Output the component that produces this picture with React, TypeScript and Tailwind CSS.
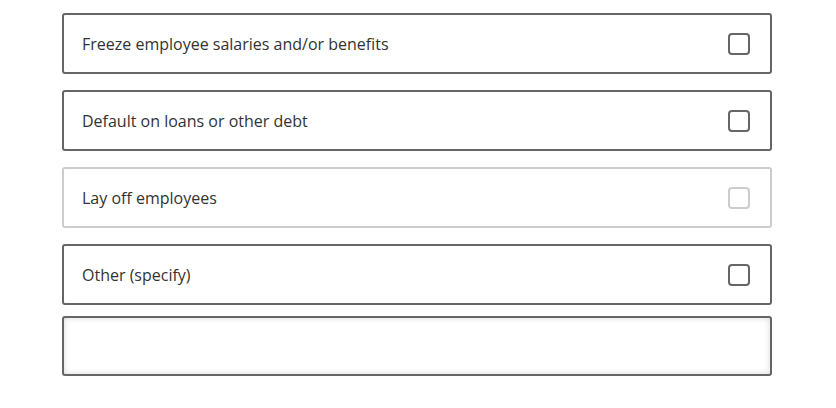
const options = [
  { label: "Freeze employee salaries and/or benefits", disabled: false },
  { label: "Default on loans or other debt", disabled: false },
  { label: "Lay off employees", disabled: true },
  { label: "Other (specify)", disabled: false },
];

export default function App() {
  return (
    <div className="min-h-screen bg-white pt-[13px] font-['Open_Sans',sans-serif] text-[#333]">
      <div className="ml-[62px] w-[710px]">
        {options.map((opt) => (
          <label
            key={opt.label}
            className={
              opt.disabled
                ? "mb-[16px] flex h-[61px] items-center justify-between rounded-[3px] border-2 border-[#ccc] pl-[18px] pr-[20px]"
                : "mb-[16px] flex h-[61px] items-center justify-between rounded-[3px] border-2 border-[#666] pl-[18px] pr-[20px]"
            }
          >
            <span className="text-[16px]">{opt.label}</span>
            <span
              className={
                opt.disabled
                  ? "h-[22px] w-[22px] rounded-[4px] border-2 border-[#ccc]"
                  : "h-[22px] w-[22px] rounded-[4px] border-2 border-[#666]"
              }
            />
          </label>
        ))}
        <textarea className="-mt-[5px] block h-[60px] w-full resize-none rounded-[3px] border-2 border-[#666] shadow-[inset_0_0_6px_rgba(0,0,0,0.15)] outline-none" />
      </div>
    </div>
  );
}
